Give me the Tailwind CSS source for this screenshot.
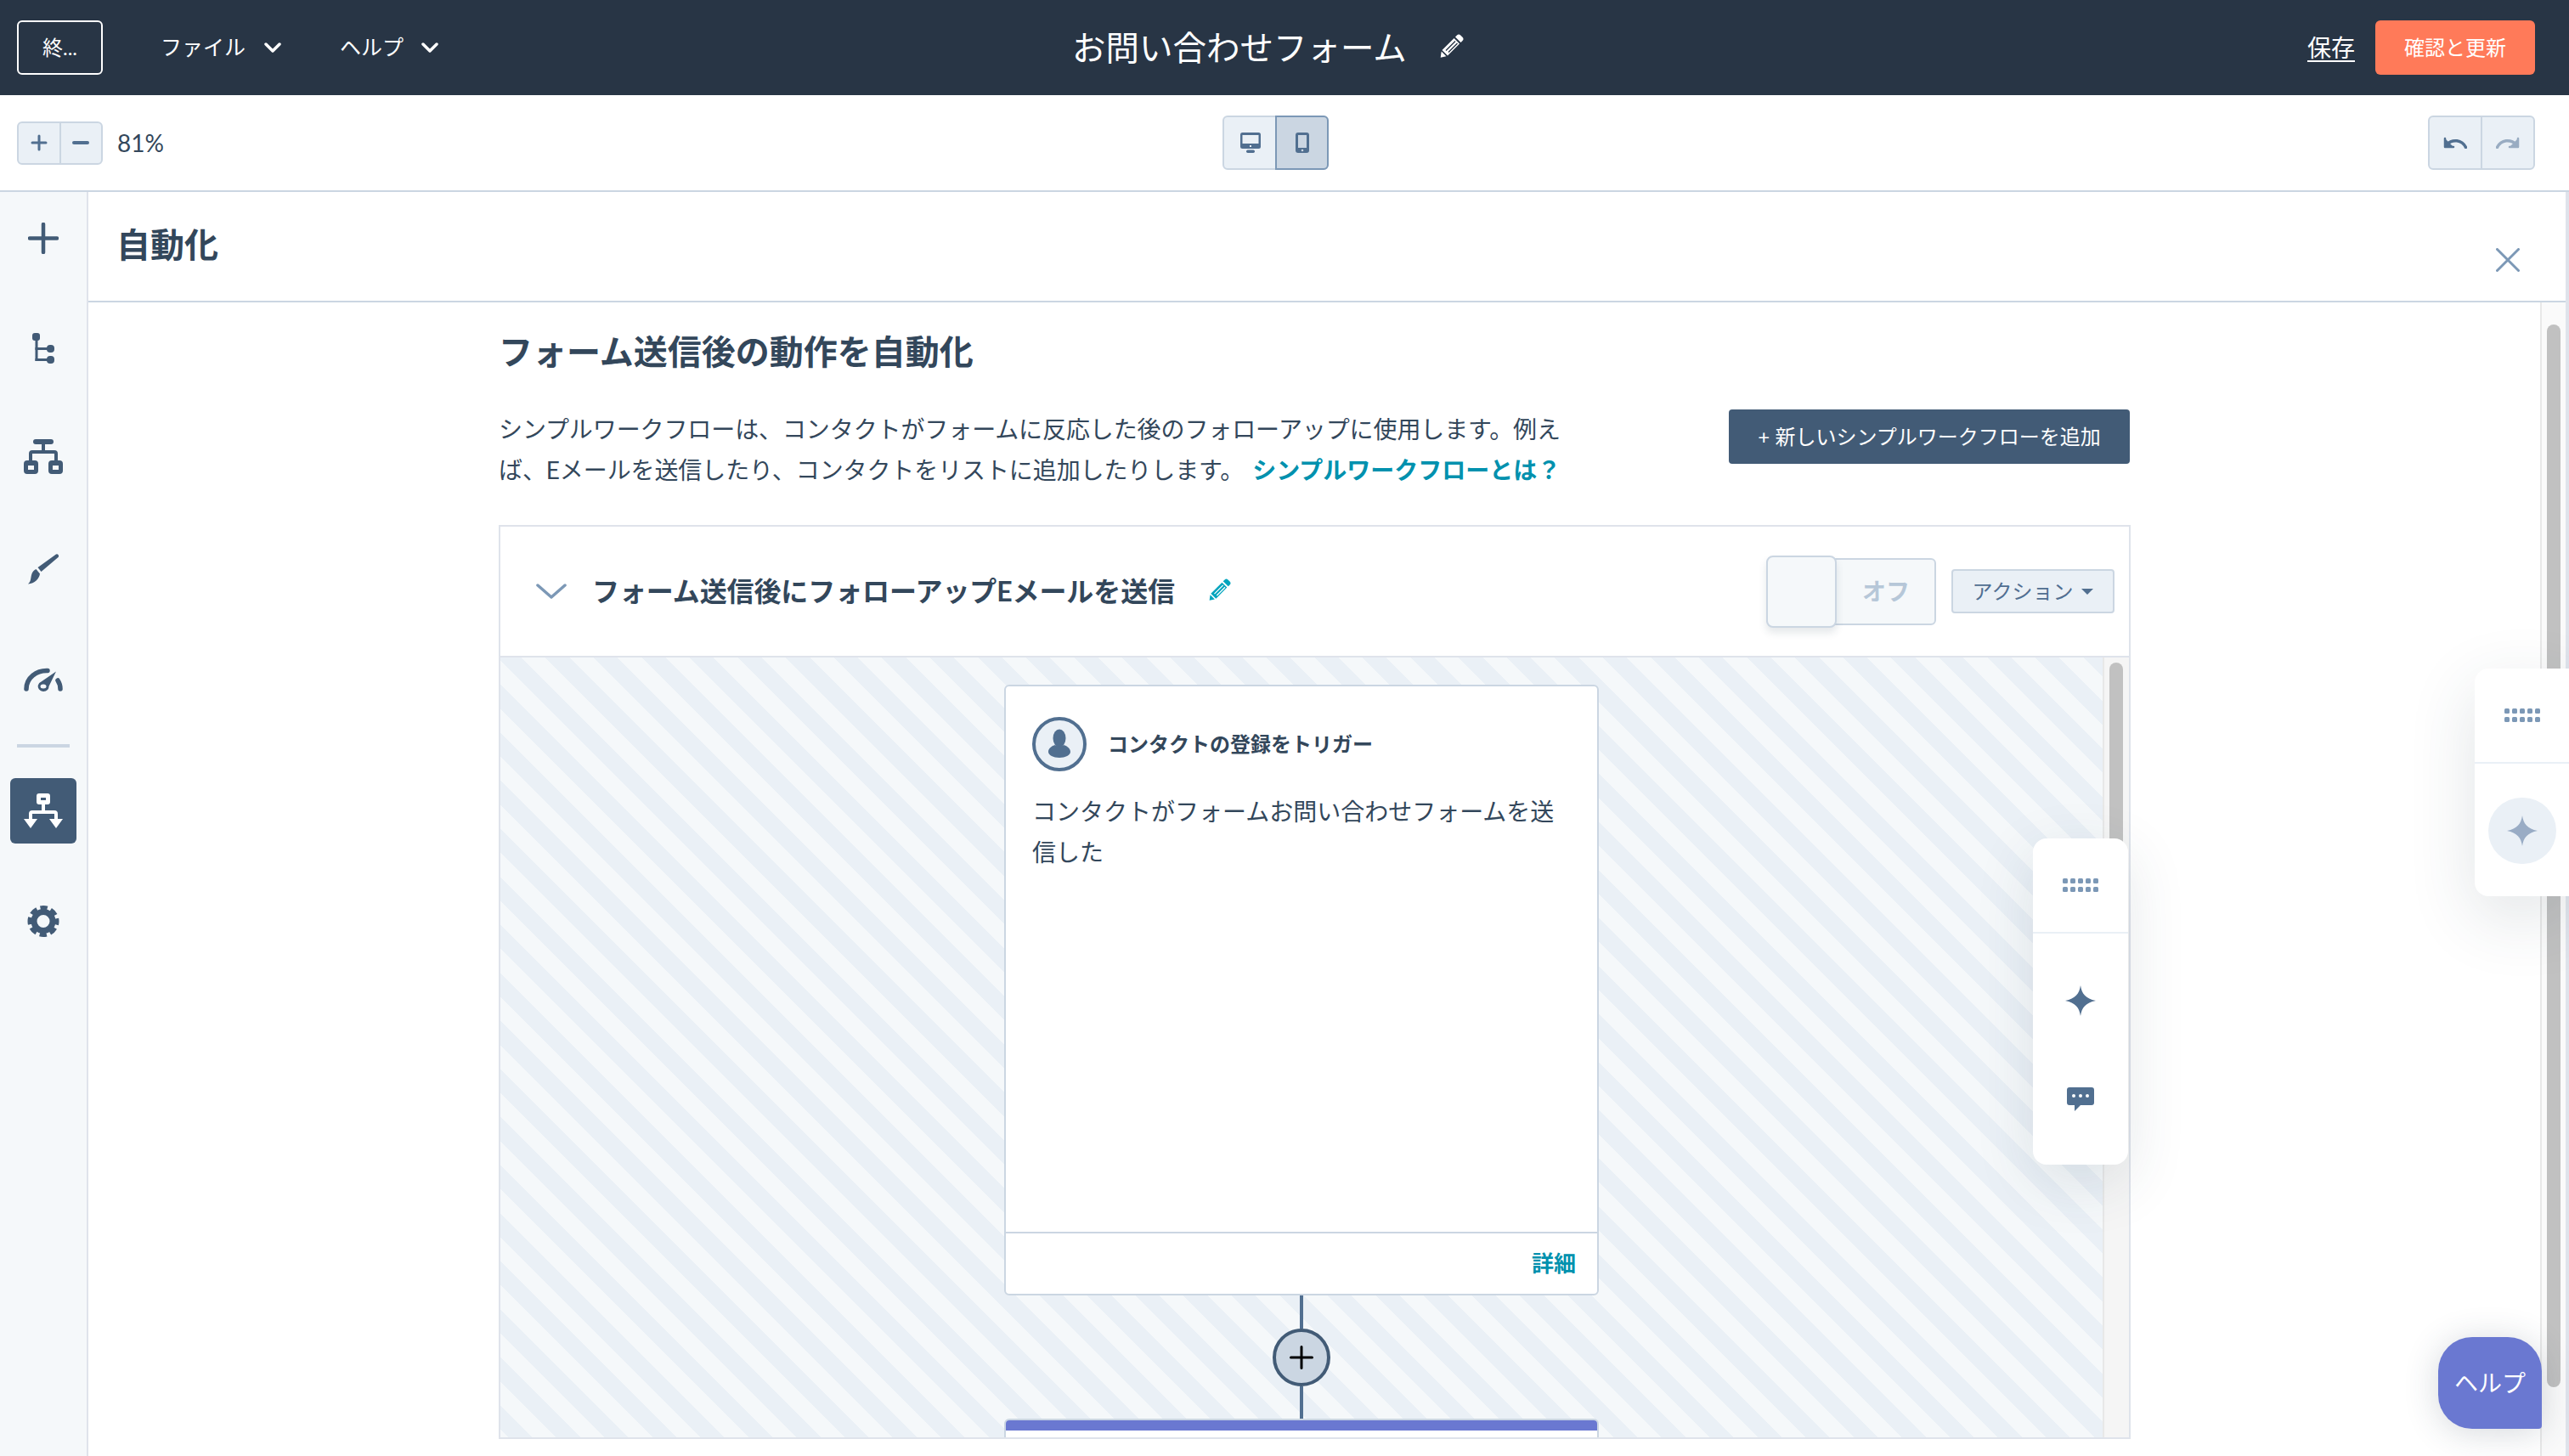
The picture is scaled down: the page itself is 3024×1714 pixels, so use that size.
<!DOCTYPE html>
<html lang="ja">
<head>
<meta charset="UTF-8">
<title>お問い合わせフォーム</title>
<script src="https://cdn.jsdelivr.net/npm/@tailwindcss/browser@4"></script>
</head>
<body class="font-['Lato','Noto_Sans_CJK_JP',sans-serif] text-[#33475b]">
<div class="relative w-[3024px] h-[1714px] overflow-hidden bg-white flex flex-col">

  <!-- top bar -->
  <header class="h-[112px] shrink-0 bg-[#283545] text-white flex items-center">
    <div class="w-[1262px] shrink-0 flex items-center pl-[20px]">
      <button class="w-[101px] h-[64px] border-2 border-white rounded-[6px] text-[24px] flex items-center justify-center">終...</button>
      <span class="ml-[68px] text-[25px]">ファイル</span>
      <svg class="ml-[22px]" width="20" height="12" viewBox="0 0 20 12" fill="none" stroke="white" stroke-width="3.5" stroke-linecap="round" stroke-linejoin="round"><path d="M2 2l8 8 8-8"/></svg>
      <span class="ml-[69px] text-[25px]">ヘルプ</span>
      <svg class="ml-[21px]" width="20" height="12" viewBox="0 0 20 12" fill="none" stroke="white" stroke-width="3.5" stroke-linecap="round" stroke-linejoin="round"><path d="M2 2l8 8 8-8"/></svg>
    </div>
    <span class="text-[39.5px] leading-none">お問い合わせフォーム</span>
    <svg class="ml-[39px] -mt-[4px]" width="28" height="28" viewBox="0 0 28 28" fill="white"><path d="M20 1.5a3 3 0 0 1 4.2 0l2.3 2.3a3 3 0 0 1 0 4.2l-2 2-6.500-6.500zM16.600 5 23 11.400 9 25.500 2.500 19zM1.700 20.600l5.700 5.700-6.700 1.500z"/><path d="M7 19.500 18 8.500M10 21.500 20.500 11" stroke="#283545" stroke-width="1.400"/></svg>
    <div class="ml-auto flex items-center pr-[40px]">
      <span class="text-[28px] underline underline-offset-4">保存</span>
      <button class="ml-[24px] w-[188px] h-[64px] bg-[#ff7a59] rounded-[6px] text-[24px] flex items-center justify-center">確認と更新</button>
    </div>
  </header>

  <!-- toolbar -->
  <div class="h-[114px] shrink-0 border-b-2 border-[#cbd6e2] flex items-center">
    <div class="w-[1439px] shrink-0 flex items-center pl-[20px]">
      <div class="w-[101px] h-[51px] flex bg-[#eaf0f6] border-2 border-[#cbd6e2] rounded-[6px]">
        <div class="flex-1 border-r-2 border-[#cbd6e2] flex items-center justify-center">
          <svg width="20" height="20" viewBox="0 0 20 20" stroke="#516f90" stroke-width="3" stroke-linecap="round"><path d="M10 2v16M2 10h16"/></svg>
        </div>
        <div class="flex-1 flex items-center justify-center">
          <svg width="20" height="20" viewBox="0 0 20 20" stroke="#516f90" stroke-width="4" stroke-linecap="round"><path d="M2 10h16"/></svg>
        </div>
      </div>
      <span class="ml-[17px] text-[28px]">81%</span>
    </div>
    <div class="w-[125px] h-[64px] flex rounded-[6px] bg-[#eaf0f6] border-2 border-[#cbd6e2]">
      <div class="w-[62px] flex items-center justify-center">
        <svg width="24" height="24" viewBox="0 0 24 24"><rect width="24" height="19" rx="2.500" fill="#516f90"/><rect x="2.500" y="3" width="19" height="10" fill="#eaf0f6"/><rect x="11" y="15" width="2" height="2" fill="#eaf0f6"/><rect x="7" y="20.500" width="10" height="3.500" rx="1.700" fill="#516f90"/></svg>
      </div>
      <div class="flex-1 -m-[2px] bg-[#cbd6e2] border-2 border-[#7c98b6] rounded-r-[6px] flex items-center justify-center">
        <svg width="16" height="24" viewBox="0 0 16 24"><rect width="16" height="24" rx="3" fill="#516f90"/><rect x="3" y="3" width="10" height="15" fill="#cbd6e2"/><circle cx="8" cy="21" r="1.300" fill="#cbd6e2"/></svg>
      </div>
    </div>
    <div class="ml-auto mr-[40px] w-[126px] h-[64px] flex bg-[#eaf0f6] border-2 border-[#cbd6e2] rounded-[6px]">
      <div class="flex-1 border-r-2 border-[#cbd6e2] flex items-center justify-center">
        <svg width="28" height="14" viewBox="0 0 28 14" fill="none" stroke="#516f90" stroke-width="3.500" stroke-linecap="round"><path d="M26.500 12.500C22 3.500 11 2 3.500 9.500"/><path d="M2 2v10h10" fill="#516f90" stroke-width="2.500" stroke-linejoin="round"/></svg>
      </div>
      <div class="flex-1 flex items-center justify-center">
        <svg width="28" height="14" viewBox="0 0 28 14" fill="none" stroke="#99acc2" stroke-width="3.500" stroke-linecap="round"><path d="M1.500 12.500C6 3.500 17 2 24.500 9.500"/><path d="M26 2v10H16" fill="#99acc2" stroke-width="2.500" stroke-linejoin="round"/></svg>
      </div>
    </div>
  </div>

  <div class="flex-1 flex min-h-0">
    <!-- sidebar -->
    <aside class="w-[104px] shrink-0 bg-[#f5f8fa] border-r-2 border-[#dfe3eb] flex flex-col items-center">
      <svg class="mt-[36px]" width="36" height="37" viewBox="0 0 36 37" stroke="#425b76" stroke-width="4.500" stroke-linecap="round"><path d="M18 2v33M2 18.500h32"/></svg>
      <svg class="mt-[92px]" width="26" height="37" viewBox="0 0 26 37" fill="#425b76"><rect x="0" y="1" width="9" height="9" rx="3"/><rect x="3.500" y="9" width="3" height="25"/><rect x="3.500" y="18" width="15" height="3"/><rect x="3.500" y="31" width="15" height="3"/><rect x="17" y="15" width="9" height="9" rx="4"/><rect x="17" y="28" width="9" height="9" rx="4"/></svg>
      <svg class="mt-[89px]" width="46" height="41" viewBox="0 0 46 41" fill="#425b76"><rect x="11" y="0" width="24" height="6" rx="3"/><rect x="21" y="5" width="4" height="9"/><path d="M10 13h26a4 4 0 0 1 4 4v9h-4v-9H10v9H6v-9a4 4 0 0 1 4-4z"/><path fill-rule="evenodd" d="M4 25h9a4 4 0 0 1 4 4v8a4 4 0 0 1-4 4H4a4 4 0 0 1-4-4v-8a4 4 0 0 1 4-4zm1 6v5h7v-5zM33 25h9a4 4 0 0 1 4 4v8a4 4 0 0 1-4 4h-9a4 4 0 0 1-4-4v-8a4 4 0 0 1 4-4zm1 6v5h7v-5z"/></svg>
      <svg class="mt-[94px]" width="36" height="36" viewBox="0 0 36 36" fill="#425b76"><path d="M33 .500a2.200 2.200 0 0 1 2.500 3.500L15.500 21l-4-5zM9.500 18l4.500 5.500c-1 6-6 11.500-14 12 3.500-3 3-6.500 4-10.500.800-3.500 3-6 5.500-7z"/></svg>
      <svg class="mt-[98px]" width="46" height="28" viewBox="0 0 46 28" fill="none" stroke="#425b76"><path d="M3 25C3 12 15 3 28 3.500" stroke-width="5.500" stroke-linecap="round"/><path d="M40 15c2 3 3 6 3 10" stroke-width="5.500" stroke-linecap="round"/><path d="M38 4.500 20.500 16.500a6.500 6 0 1 0 7.500 9.500c1-1 1.500-2.500 1.500-4z" fill="#425b76" stroke="none"/><ellipse cx="23" cy="22" rx="3.500" ry="2.500" fill="#f5f8fa" stroke="none"/></svg>
      <div class="mt-[62px] w-[62px] h-[4px] bg-[#cbd6e2]"></div>
      <div class="mt-[36px] w-[78px] h-[77px] bg-[#425b76] rounded-[6px] flex items-center justify-center">
        <svg width="46" height="41" viewBox="0 0 46 41" fill="white"><path fill-rule="evenodd" d="M18 0h10a3 3 0 0 1 3 3v7a3 3 0 0 1-3 3H18a3 3 0 0 1-3-3V3a3 3 0 0 1 3-3zm2 5v3h6V5z"/><rect x="21" y="12" width="4" height="9"/><path d="M10 20h26a4 4 0 0 1 4 4v7h-4v-7H10v7H6v-7a4 4 0 0 1 4-4z"/><path d="M0 30h16L8 41zM30 30h16l-8 11z"/></svg>
      </div>
      <svg class="mt-[72px]" width="38" height="39" viewBox="0 0 38 39" fill="none" stroke="#425b76"><circle cx="19" cy="19.500" r="11" stroke-width="7"/><circle cx="19" cy="19.500" r="15" stroke-width="7" stroke-dasharray="7.800 4" stroke-dashoffset="3.900"/></svg>
    </aside>

    <!-- automation panel -->
    <main class="flex-1 min-w-0 flex flex-col border-r-4 border-[#dfe3eb]">
      <div class="h-[130px] shrink-0 border-b-2 border-[#cbd6e2] flex pl-[33px] pr-[54px]">
        <h1 class="mt-[32px] text-[40px] font-bold leading-[60px]">自動化</h1>
        <svg class="ml-auto mt-[66px]" width="28" height="28" viewBox="0 0 28 28" stroke="#7c98b6" stroke-width="3" stroke-linecap="round"><path d="M1.500 1.500l25 25M26.500 1.500l-25 25"/></svg>
      </div>
      <div class="flex-1 min-h-0 flex">
        <div class="flex-1 min-w-0 pl-[483px]">
          <div class="w-[1921px]">
            <h2 class="mt-[30px] text-[40px] leading-[56px] font-bold">フォーム送信後の動作を自動化</h2>
            <div class="mt-[39px] flex items-start justify-between pr-[1px]">
              <p class="w-[1262px] text-[28px] leading-[48px] tracking-[-0.1px]">シンプルワークフローは、コンタクトがフォームに反応した後のフォローアップに使用します。例えば、Eメールを送信したり、コンタクトをリストに追加したりします。 <a class="ml-[3px] font-bold text-[#0091ae] tracking-normal">シンプルワークフローとは？</a></p>
              <button class="mt-px w-[472px] h-[64px] bg-[#425b76] text-white text-[24px] rounded-[4px] flex items-center justify-center">+ 新しいシンプルワークフローを追加</button>
            </div>
            <section class="mt-[41px] border-2 border-[#dfe3eb]">
              <div class="h-[154px] border-b-2 border-[#dfe3eb] flex items-center pl-[42px] pr-[17px]">
                <svg width="36" height="18" viewBox="0 0 36 18" fill="none" stroke="#7c98b6" stroke-width="3.500" stroke-linecap="round" stroke-linejoin="round"><path d="M2 2l16 14L34 2"/></svg>
                <span class="ml-[30px] text-[32px] tracking-[-0.1px] font-bold">フォーム送信後にフォローアップEメールを送信</span>
                <svg class="ml-[40px] -mt-[4px]" width="26" height="26" viewBox="0 0 28 28" fill="#00a4bd"><path d="M20 1.500a3 3 0 0 1 4.200 0l2.300 2.300a3 3 0 0 1 0 4.200l-2 2-6.500-6.500zM16.600 5 23 11.400 9 25.500 2.500 19zM1.700 20.600l5.700 5.700-6.700 1.500z"/><path d="M7 19.500 18 8.500M10 21.500 20.500 11" stroke="white" stroke-width="1.400"/></svg>
                <div class="ml-auto relative w-[200px] h-[79px] bg-[#f5f8fa] border-2 border-[#cbd6e2] rounded-[6px] flex items-center justify-end pr-[29px]">
                  <span class="text-[28px] font-bold text-[#b6c7d8]">オフ</span>
                  <div class="absolute -left-[2px] -top-[5px] w-[83px] h-[85px] bg-[#f5f8fa] border-2 border-[#cbd6e2] rounded-[8px] shadow-[0_6px_10px_rgba(45,62,80,0.12)]"></div>
                </div>
                <button class="ml-[18px] w-[192px] h-[52px] bg-[#eaf0f6] border-2 border-[#cbd6e2] rounded-[4px] text-[24px] text-[#506e91] flex items-center justify-center">
                  アクション
                  <svg class="ml-[10px]" width="14" height="7" viewBox="0 0 14 7" fill="#516f90"><path d="M0 0h14L7 7z"/></svg>
                </button>
              </div>
              <div class="h-[918px] flex overflow-hidden">
                <div class="flex-1 min-w-0 flex flex-col items-center pt-[32px] bg-[repeating-linear-gradient(45deg,#f5f8fa_0,#f5f8fa_6.6px,#eaf0f6_6.6px,#eaf0f6_26.6px,#f5f8fa_26.6px,#f5f8fa_40px)]">
                  <div class="w-[700px] h-[719px] shrink-0 bg-white border-2 border-[#cbd6e2] rounded-[6px] flex flex-col">
                    <div class="flex-1 px-[31px] pt-[36px]">
                      <div class="flex items-center">
                        <div class="w-[64px] h-[64px] rounded-full bg-[#eaf0f6] border-4 border-[#516f90] flex items-center justify-center">
                          <svg width="28" height="36" viewBox="0 0 28 36" fill="#516f90"><ellipse cx="14" cy="11" rx="7.500" ry="10.500"/><path d="M1 27c0-4 4-7 8-8 3 2 7 2 10 0 4 1 8 4 8 8 0 4-6 7-13 7S1 31 1 27z"/></svg>
                        </div>
                        <span class="ml-[25px] text-[24px] font-bold">コンタクトの登録をトリガー</span>
                      </div>
                      <p class="mt-[23px] text-[28px] leading-[48px]">コンタクトがフォームお問い合わせフォームを送信した</p>
                    </div>
                    <div class="h-[73px] border-t-2 border-[#cbd6e2] flex items-center justify-end pr-[25px]">
                      <a class="text-[26px] font-bold text-[#0091ae]">詳細</a>
                    </div>
                  </div>
                  <div class="w-[4px] h-[39px] shrink-0 bg-[#516f90]"></div>
                  <div class="w-[68px] h-[68px] shrink-0 rounded-full bg-[#cbd6e2] border-4 border-[#425b76] flex items-center justify-center">
                    <svg width="28" height="28" viewBox="0 0 28 28" stroke="black" stroke-width="3" stroke-linecap="round"><path d="M14 1.500v25M1.500 14h25"/></svg>
                  </div>
                  <div class="w-[4px] h-[38px] shrink-0 bg-[#516f90]"></div>
                  <div class="w-[700px] h-[60px] shrink-0 bg-white border-2 border-[#cbd6e2] rounded-t-[6px]">
                    <div class="h-[12px] bg-[#6a78d1] rounded-t-[4px]"></div>
                  </div>
                </div>
                <div class="w-[31px] shrink-0 bg-[#f5f5f5] border-l-2 border-[#e8e8e8] pl-[6px] pt-[6px]">
                  <div class="w-[16px] h-[500px] rounded-full bg-[#c1c1c1]"></div>
                </div>
              </div>
            </section>
          </div>
        </div>
        <div class="w-[30px] shrink-0 bg-[#fafafa] border-l-2 border-[#e8e8e8] pl-[6px] pt-[26px]">
          <div class="w-[16px] h-[1251px] rounded-full bg-[#c1c1c1]"></div>
        </div>
      </div>
    </main>
  </div>

  <!-- floating rails and help button, these sit over the page -->
  <div class="absolute left-[2393px] top-[987px] w-[112px] h-[384px] bg-white rounded-[16px] shadow-[0_20px_70px_rgba(45,62,80,0.12)] flex flex-col items-center">
    <div class="w-full h-[112px] border-b-2 border-[#eaf0f6] flex items-center justify-center">
      <svg width="42" height="16" viewBox="0 0 42 16" fill="#7c98b6"><rect width="6" height="6" rx="1.500"/><rect x="9" width="6" height="6" rx="1.500"/><rect x="18" width="6" height="6" rx="1.500"/><rect x="27" width="6" height="6" rx="1.500"/><rect x="36" width="6" height="6" rx="1.500"/><rect y="10" width="6" height="6" rx="1.500"/><rect x="9" y="10" width="6" height="6" rx="1.500"/><rect x="18" y="10" width="6" height="6" rx="1.500"/><rect x="27" y="10" width="6" height="6" rx="1.500"/><rect x="36" y="10" width="6" height="6" rx="1.500"/></svg>
    </div>
    <svg class="mt-[61px]" width="36" height="36" viewBox="0 0 36 36" fill="#516f90"><path d="M18 0c1.500 10 6 15.500 18 18-12 2.500-16.500 8-18 18-1.500-10-6-15.500-18-18C12 15.500 16.500 10 18 0z"/></svg>
    <svg class="mt-[84px]" width="32" height="28" viewBox="0 0 32 28"><path d="M3 0h26a3 3 0 0 1 3 3v15a3 3 0 0 1-3 3H16l-7 7v-7H3a3 3 0 0 1-3-3V3a3 3 0 0 1 3-3z" fill="#516f90"/><circle cx="8" cy="10" r="2" fill="white"/><circle cx="16" cy="10" r="2" fill="white"/><circle cx="24" cy="10" r="2" fill="white"/></svg>
  </div>

  <div class="absolute left-[2913px] top-[787px] w-[111px] h-[268px] bg-white rounded-l-[16px] shadow-[0_24px_80px_rgba(45,62,80,0.14)] flex flex-col items-center">
    <div class="w-full h-[112px] border-b-2 border-[#eaf0f6] flex items-center justify-center">
      <svg width="42" height="16" viewBox="0 0 42 16" fill="#7c98b6"><rect width="6" height="6" rx="1.500"/><rect x="9" width="6" height="6" rx="1.500"/><rect x="18" width="6" height="6" rx="1.500"/><rect x="27" width="6" height="6" rx="1.500"/><rect x="36" width="6" height="6" rx="1.500"/><rect y="10" width="6" height="6" rx="1.500"/><rect x="9" y="10" width="6" height="6" rx="1.500"/><rect x="18" y="10" width="6" height="6" rx="1.500"/><rect x="27" y="10" width="6" height="6" rx="1.500"/><rect x="36" y="10" width="6" height="6" rx="1.500"/></svg>
    </div>
    <div class="mt-[40px] w-[80px] h-[78px] rounded-full bg-[#eaf0f6] flex items-center justify-center">
      <svg width="36" height="36" viewBox="0 0 36 36" fill="#99acc5"><path d="M18 0c1.500 10 6 15.500 18 18-12 2.500-16.500 8-18 18-1.500-10-6-15.500-18-18C12 15.500 16.500 10 18 0z"/></svg>
    </div>
  </div>

  <div class="absolute left-[2870px] top-[1574px] w-[122px] h-[108px] bg-[#6a78d1] rounded-t-[40px] rounded-bl-[40px] rounded-br-[4px] text-white text-[28px] flex items-center justify-center shadow-[0_4px_40px_rgba(45,62,80,0.2)]">ヘルプ</div>
</div>
</body>
</html>
